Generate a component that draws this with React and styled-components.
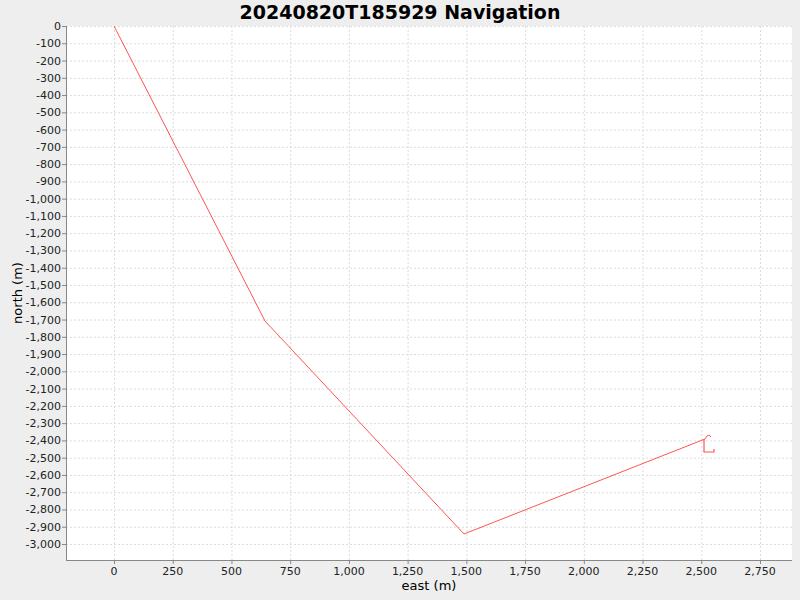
import React from 'react';
import styled, { createGlobalStyle } from 'styled-components';

const Global = createGlobalStyle`
  html, body { margin: 0; background: #eeeeee; }
  body { font-family: "DejaVu Sans", sans-serif; }
`;

const Page = styled.div`
  width: 800px;
  height: 600px;
  display: flex;
  flex-direction: column;
  background: #eeeeee;
`;

const Title = styled.div`
  height: 20px;
  line-height: 25px;
  text-align: center;
  font-size: 19px;
  font-weight: bold;
  color: #000;
`;

const Chart = styled.svg`
  display: block;
  width: 800px;
  height: 580px;
  font-family: "DejaVu Sans", sans-serif;
`;

const L = 66, R = 792, T = 26, B = 560;
const xs = (v) => 114 + v * (646 / 2750);
const ys = (v) => 26 + -v * (518 / 3000);

const yTicks = Array.from({ length: 31 }, (_, i) => -i * 100);
const xTicks = Array.from({ length: 12 }, (_, i) => i * 250);
const fmt = (n) => (n === 0 ? '0' : n.toLocaleString('en-US'));

const track = [
  [114, 26], [265, 321], [464, 534], [705, 439], [707, 436], [709, 435], [711, 437],
];
const hook = [[704, 439], [704, 452], [714, 452], [714, 449]];
const pts = (a) => a.map((p) => p.join(',')).join(' ');

export default function App() {
  return (
    <Page>
      <Global />
      <Title>20240820T185929 Navigation</Title>
      <Chart viewBox="0 20 800 580">
        <rect x={L} y={T} width={R - L} height={B - T} fill="#fff" />
        {yTicks.map((v) => (
          <line key={'gy' + v} x1={L} x2={R} y1={ys(v) + 0.5} y2={ys(v) + 0.5}
            stroke="#dcdcdc" strokeDasharray="2 2" />
        ))}
        {xTicks.map((v) => (
          <line key={'gx' + v} y1={T} y2={B} x1={xs(v) + 0.5} x2={xs(v) + 0.5}
            stroke="#dcdcdc" strokeDasharray="2 2" />
        ))}
        <polyline points={pts(track)} fill="none" stroke="#ff5555" strokeWidth="1" />
        <polyline points={pts(hook)} fill="none" stroke="#ff5555" strokeWidth="1.2" />
        <line x1={L + 0.5} x2={L + 0.5} y1={T} y2={B} stroke="#888" />
        <line x1={L} x2={R} y1={B + 0.5} y2={B + 0.5} stroke="#888" />
        {yTicks.map((v) => (
          <g key={'ty' + v}>
            <line x1={L - 4} x2={L} y1={ys(v) + 0.5} y2={ys(v) + 0.5} stroke="#888" />
            <text x={L - 5} y={ys(v) + 4} fontSize="11" textAnchor="end" fill="#222">{fmt(v)}</text>
          </g>
        ))}
        {xTicks.map((v) => (
          <g key={'tx' + v}>
            <line y1={B} y2={B + 4} x1={xs(v) + 0.5} x2={xs(v) + 0.5} stroke="#888" />
            <text x={xs(v)} y={B + 15} fontSize="11" textAnchor="middle" fill="#222">{fmt(v)}</text>
          </g>
        ))}
        <text x={429} y={590} fontSize="13" textAnchor="middle" fill="#000">east (m)</text>
        <text x={22} y={293} fontSize="13" textAnchor="middle" fill="#000"
          transform="rotate(-90 22 293)">north (m)</text>
      </Chart>
    </Page>
  );
}
